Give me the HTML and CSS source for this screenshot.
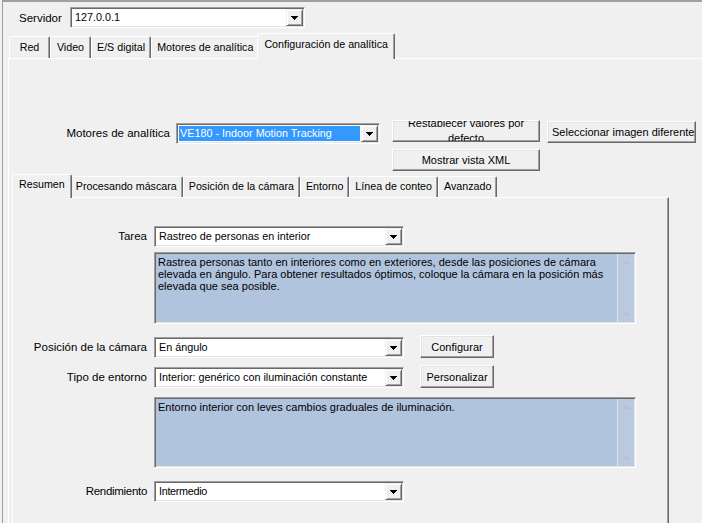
FILE: index.html
```html
<!DOCTYPE html>
<html lang="es">
<head>
    <meta charset="UTF-8">
    <meta name="viewport" content="width=device-width, initial-scale=1.0">
    <title>Configuración de analítica</title>
    <link rel="stylesheet" href="styles.css">
</head>
<body>
    <div class="frame">
        <div class="server-row">
            <span class="server-lbl">Servidor</span>
            <div class="combo server-combo">
                <span class="val">127.0.0.1</span>
                <span class="drop"><svg width="7" height="4" viewBox="0 0 7 4"><path d="M0 0h7v1H0zM1 1h5v1H1zM2 2h3v1H2zM3 3h1v1H3z"/></svg></span>
            </div>
        </div>

        <div class="tabs outer-tabs">
            <div class="tab">Red</div>
            <div class="tab">Video</div>
            <div class="tab">E/S digital</div>
            <div class="tab">Motores de analítica</div>
            <div class="tab active">Configuración de analítica</div>
        </div>

        <div class="outer-panel">
            <div class="engine-row">
                <span class="engine-lbl">Motores de analítica</span>
                <div class="combo engine-combo">
                    <span class="val selected">VE180 - Indoor Motion Tracking</span>
                    <span class="drop"><svg width="7" height="4" viewBox="0 0 7 4"><path d="M0 0h7v1H0zM1 1h5v1H1zM2 2h3v1H2zM3 3h1v1H3z"/></svg></span>
                </div>
                <div class="btn-col">
                    <button class="btn wide clip"><span>Restablecer valores por defecto</span></button>
                    <button class="btn wide">Mostrar vista XML</button>
                </div>
                <button class="btn image-btn">Seleccionar imagen diferente</button>
            </div>

            <div class="tabs inner-tabs">
                <div class="tab active">Resumen</div>
                <div class="tab">Procesando máscara</div>
                <div class="tab">Posición de la cámara</div>
                <div class="tab">Entorno</div>
                <div class="tab">Línea de conteo</div>
                <div class="tab">Avanzado</div>
            </div>

            <div class="inner-panel">
                <div class="field-row first">
                    <span class="field-lbl">Tarea</span>
                    <div class="combo field-combo">
                        <span class="val">Rastreo de personas en interior</span>
                        <span class="drop"><svg width="7" height="4" viewBox="0 0 7 4"><path d="M0 0h7v1H0zM1 1h5v1H1zM2 2h3v1H2zM3 3h1v1H3z"/></svg></span>
                    </div>
                </div>
                <div class="memo task-memo">
                    <div class="memo-text">Rastrea personas tanto en interiores como en exteriores, desde las posiciones de cámara elevada en ángulo. Para obtener resultados óptimos, coloque la cámara en la posición más elevada que sea posible.</div>
                    <div class="scroll">
                        <svg width="7" height="4" viewBox="0 0 7 4"><path d="M3 0h1v1H3zM2 1h3v1H2zM1 2h5v1H1zM0 3h7v1H0z"/></svg>
                        <svg width="7" height="4" viewBox="0 0 7 4"><path d="M0 0h7v1H0zM1 1h5v1H1zM2 2h3v1H2zM3 3h1v1H3z"/></svg>
                    </div>
                </div>

                <div class="field-row camera-row">
                    <span class="field-lbl">Posición de la cámara</span>
                    <div class="combo field-combo">
                        <span class="val">En ángulo</span>
                        <span class="drop"><svg width="7" height="4" viewBox="0 0 7 4"><path d="M0 0h7v1H0zM1 1h5v1H1zM2 2h3v1H2zM3 3h1v1H3z"/></svg></span>
                    </div>
                    <button class="btn side-btn">Configurar</button>
                </div>
                <div class="field-row env-row">
                    <span class="field-lbl">Tipo de entorno</span>
                    <div class="combo field-combo">
                        <span class="val">Interior: genérico con iluminación constante</span>
                        <span class="drop"><svg width="7" height="4" viewBox="0 0 7 4"><path d="M0 0h7v1H0zM1 1h5v1H1zM2 2h3v1H2zM3 3h1v1H3z"/></svg></span>
                    </div>
                    <button class="btn side-btn">Personalizar</button>
                </div>
                <div class="memo env-memo">
                    <div class="memo-text">Entorno interior con leves cambios graduales de iluminación.</div>
                    <div class="scroll">
                        <svg width="7" height="4" viewBox="0 0 7 4"><path d="M3 0h1v1H3zM2 1h3v1H2zM1 2h5v1H1zM0 3h7v1H0z"/></svg>
                        <svg width="7" height="4" viewBox="0 0 7 4"><path d="M0 0h7v1H0zM1 1h5v1H1zM2 2h3v1H2zM3 3h1v1H3z"/></svg>
                    </div>
                </div>

                <div class="field-row perf-row">
                    <span class="field-lbl narrow">Rendimiento</span>
                    <div class="combo field-combo">
                        <span class="val narrow">Intermedio</span>
                        <span class="drop"><svg width="7" height="4" viewBox="0 0 7 4"><path d="M0 0h7v1H0zM1 1h5v1H1zM2 2h3v1H2zM3 3h1v1H3z"/></svg></span>
                    </div>
                </div>
            </div>
        </div>
    </div>
</body>
</html>
```

FILE: styles.css
```css
* {
    margin: 0;
    padding: 0;
    box-sizing: border-box;
}

body {
    font-family: "Liberation Sans", Arial, sans-serif;
    font-size: 11px;
    color: #000;
    background-color: #f0f0f0;
    overflow: hidden;
}

.frame {
    margin-left: 2px;
    height: 523px;
    border-top: 2px solid #a0a0a0;
    border-left: 1px solid #a0a0a0;
}

/* server selector */
.server-row {
    display: flex;
    align-items: center;
    padding: 5px 0 0 16px;
}

.server-lbl {
    width: 51px;
    font-size: 11.5px;
}

/* combo boxes */
.combo {
    display: flex;
    align-items: center;
    height: 21px;
    padding: 2px;
    background-color: #fff;
    border: 1px solid;
    border-color: #a0a0a0 #fff #fff #a0a0a0;
    box-shadow: inset 1px 1px 0 #696969, inset -1px -1px 0 #e3e3e3;
}

.combo .val {
    flex: 1;
    height: 100%;
    padding-left: 2px;
    font-size: 10.8px;
    line-height: 15px;
    white-space: nowrap;
    overflow: hidden;
}

.combo .val.selected {
    margin: 0 1px 0 0;
    padding-left: 1px;
    background-color: #3399ff;
    color: #fff;
}

.drop {
    display: flex;
    align-items: center;
    justify-content: center;
    width: 17px;
    height: 17px;
    margin: -1px -1px -1px 0;
    background-color: #f0f0f0;
    border: 1px solid;
    border-color: #f0f0f0 #696969 #696969 #f0f0f0;
    box-shadow: inset 1px 1px 0 #fff, inset -1px -1px 0 #a0a0a0;
}

.drop svg {
    display: block;
    shape-rendering: crispEdges;
    margin-top: 1px;
}

.server-combo {
    width: 235px;
}

.engine-combo {
    width: 204px;
    margin: 3px 0 0 6px;
}

.field-combo {
    width: 250px;
}

/* buttons */
.btn {
    font-family: inherit;
    font-size: 11px;
    color: #000;
    height: 22px;
    padding: 0 4px;
    background-color: #f0f0f0;
    border: 1px solid;
    border-color: #fff #696969 #696969 #fff;
    box-shadow: inset -1px -1px 0 #a0a0a0, inset 1px 1px 0 #e3e3e3;
    white-space: nowrap;
}

.btn.wide {
    width: 148px;
}

.btn.clip {
    display: flex;
    align-items: center;
    justify-content: center;
    overflow: hidden;
    white-space: normal;
    padding: 0 12px;
}

.btn.clip span {
    line-height: 15px;
    text-align: center;
}

.btn-col {
    display: flex;
    flex-direction: column;
    gap: 7px;
    margin-left: 12px;
}

.image-btn {
    width: 149px;
    margin: 1px 0 0 7px;
}

.side-btn {
    width: 74px;
    height: 23px;
    margin-left: 16px;
}

/* tabs */
.tabs {
    display: flex;
    align-items: flex-end;
}

.tab {
    min-width: 41px;
    padding: 0 5px;
    font-size: 10.7px;
    text-align: center;
    white-space: nowrap;
    border: 1px solid;
    border-bottom: none;
    border-color: #fff #696969 transparent #fff;
    border-radius: 2px 2px 0 0;
    box-shadow: inset -1px 0 0 #a0a0a0;
    background-color: #f0f0f0;
}

.tab.active {
    position: relative;
    z-index: 1;
    margin: 0 -2px -1px -2px;
    padding: 0 6px;
}

.outer-tabs {
    height: 25px;
    margin: 5px 0 0 6px;
}

.outer-tabs .tab {
    height: 22px;
    line-height: 20px;
}

.outer-tabs .tab.active {
    height: 26px;
    line-height: 20px;
}

.inner-tabs {
    height: 22px;
    margin: 4px 0 0 3px;
}

.inner-tabs .tab {
    height: 21px;
    line-height: 19px;
}

.inner-tabs .tab.active {
    height: 24px;
    line-height: 19px;
    margin-left: 0;
}

/* panels */
.outer-panel {
    margin-left: 5px;
    height: 470px;
    border-top: 1px solid #fff;
    border-left: 1px solid #fff;
}

.engine-row {
    display: flex;
    align-items: flex-start;
    padding-top: 61px;
}

.engine-lbl {
    width: 161px;
    font-size: 11.5px;
    text-align: right;
    line-height: 21px;
    margin-top: 3px;
}

.inner-panel {
    width: 657px;
    height: 330px;
    margin-left: 3px;
    padding-top: 28px;
    border-top: 1px solid #fff;
    border-left: 1px solid #fff;
    border-right: 1px solid #696969;
    box-shadow: inset -1px 0 0 #a0a0a0;
}

.field-row {
    display: flex;
    align-items: flex-end;
}

.field-lbl {
    width: 134px;
    margin-right: 7px;
    font-size: 11.5px;
    text-align: right;
    line-height: 21px;
    white-space: nowrap;
}

.narrow {
    letter-spacing: -0.3px;
}

.camera-row {
    margin-top: 11px;
}

.env-row {
    margin-top: 7px;
}

.perf-row {
    margin-top: 13px;
}

/* description boxes */
.memo {
    display: flex;
    width: 482px;
    margin-left: 141px;
    padding: 2px;
    background-color: #b0c4de;
    border: 1px solid;
    border-color: #a0a0a0 #fff #fff #a0a0a0;
    box-shadow: inset 1px 1px 0 #696969, inset -1px -1px 0 #e3e3e3;
}

.task-memo {
    height: 72px;
    margin-top: 5px;
}

.env-memo {
    height: 71px;
    margin-top: 9px;
}

.memo-text {
    flex: 1;
    padding: 1px 2px 0 1px;
    line-height: 12px;
}

.scroll {
    display: flex;
    flex-direction: column;
    justify-content: space-between;
    align-items: center;
    width: 17px;
    margin: -1px -1px -1px 0;
    padding: 6px 0 5px;
    background-color: #b8c9e0;
    border-left: 1px solid #dde5f0;
}

.scroll svg {
    display: block;
    shape-rendering: crispEdges;
    fill: #c0c0c0;
}
```
